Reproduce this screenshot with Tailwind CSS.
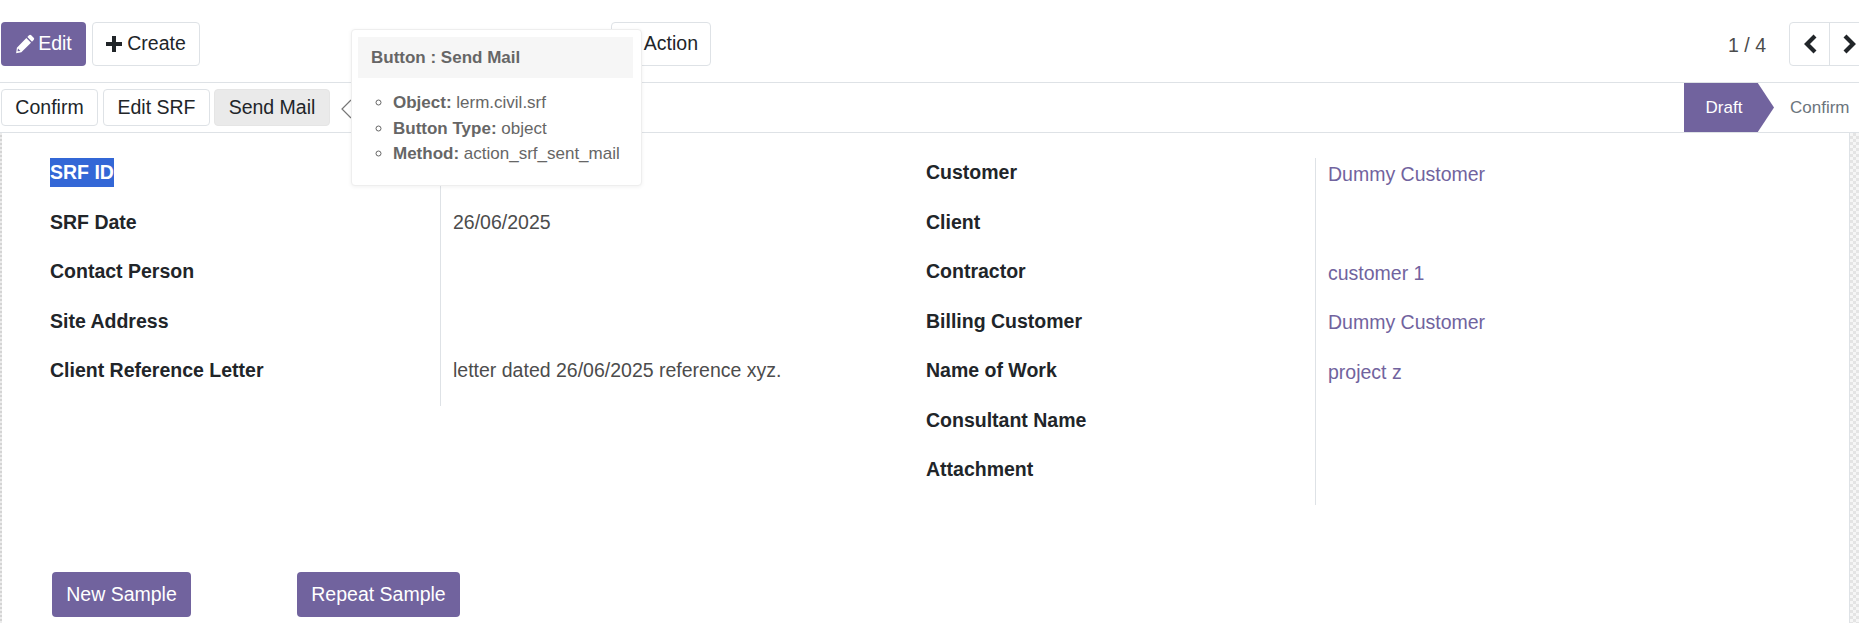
<!DOCTYPE html>
<html>
<head>
<meta charset="utf-8">
<script src="https://cdn.jsdelivr.net/npm/@tailwindcss/browser@4"></script>
</head>
<body class="bg-white">
<div class="relative w-[1859px] h-[623px] overflow-hidden bg-white font-['Liberation_Sans',Arial,sans-serif] text-[19.5px] text-[#212529]">

  <!-- control panel top -->
  <div class="flex items-start h-[83px] border-b border-[#dee2e6] pt-[22px] pl-[1px]">
    <button class="flex items-center justify-center gap-[3px] w-[85px] h-[44px] rounded-[4px] bg-[#71639e] text-white">
      <svg class="w-[20px] h-[20px]" viewBox="0 0 18 18" fill="#fff"><path d="M12.6 1.2a1.4 1.4 0 0 1 2 0l2.2 2.2a1.4 1.4 0 0 1 0 2L15.3 7 11.1 2.7zM10.2 3.6l4.2 4.2-8.7 8.7-4.7.8.7-4.9zM2.7 13l-.4 2.6 2.6-.4z"/></svg>
      <span>Edit</span>
    </button>
    <button class="flex items-center justify-center gap-[5px] ml-[6px] w-[108px] h-[44px] rounded-[4px] border border-[#dee2e6] bg-white">
      <svg class="w-[16px] h-[16px]" viewBox="0 0 16 16" fill="#212529"><path d="M6 0h4v6h6v4h-6v6H6v-6H0V6h6z"/></svg>
      <span>Create</span>
    </button>
    <button class="flex items-center justify-end pr-[12px] ml-[411px] w-[100px] h-[44px] rounded-[4px] border border-[#dee2e6] bg-white">Action</button>
    <span class="ml-auto mt-[9px] text-[#4c4c4c]">1 / 4</span>
    <div class="flex shrink-0 ml-[23px] mr-[-12px] w-[82px] h-[44px] rounded-[4px] border border-[#dee2e6]">
      <div class="flex items-center justify-center w-[40px] border-r border-[#dee2e6]">
        <svg class="w-[14px] h-[20px]" viewBox="0 0 14 20" fill="none" stroke="#212529" stroke-width="4.2"><path d="M12 2 4 10l8 8"/></svg>
      </div>
      <div class="flex items-center justify-start pl-[13px] flex-1">
        <svg class="w-[14px] h-[20px]" viewBox="0 0 14 20" fill="none" stroke="#212529" stroke-width="4.2"><path d="m2 2 8 8-8 8"/></svg>
      </div>
    </div>
  </div>

  <!-- status bar -->
  <div class="flex items-start h-[50px] border-b border-[#dee2e6] pl-[1px]">
    <div class="flex items-center gap-[5px] pt-[6px]">
      <button class="w-[97px] h-[37px] rounded-[4px] border border-[#dee2e6] bg-white">Confirm</button>
      <button class="w-[107px] h-[37px] rounded-[4px] border border-[#dee2e6] bg-white">Edit SRF</button>
      <button class="w-[116px] h-[37px] ml-[-1px] rounded-[4px] bg-[#eaeaea] border border-[#e5e5e5]">Send Mail</button>
    </div>
    <svg class="w-[11px] h-[20px] ml-[11px] mt-[16px]" viewBox="0 0 11 20" fill="none" stroke="#777" stroke-width="1.2"><path d="M10 1 1 10l9 9"/></svg>
    <div class="ml-auto flex shrink-0">
      <div class="flex items-center justify-center w-[90px] h-[49px] pr-[10px] bg-[#71639e] text-white text-[17px] [clip-path:polygon(0_0,82%_0,100%_50%,82%_100%,0_100%)]">Draft</div>
      <div class="flex items-center w-[85px] h-[49px] pl-[16px] text-[17px] text-[#6c757d] whitespace-nowrap">Confirm</div>
    </div>
  </div>

  <!-- sheet -->
  <div class="flex h-[490px]">
    <div class="w-[2px] shrink-0 bg-[repeating-conic-gradient(#d4d4d4_0_25%,#ececec_0_50%)] bg-[length:4px_4px]"></div>
    <div class="flex-1 flex flex-col">
      <div class="flex items-start pt-[25px] pl-[48px] h-[439px]">
        <!-- left group -->
        <div class="flex flex-col w-[390px] font-bold text-[#212529]">
          <div class="h-[51px]"><span class="inline-block h-[29px] leading-[29px] bg-[#3367d6] text-white">SRF ID</span></div>
          <div class="h-[48px] leading-[26px]">SRF Date</div>
          <div class="h-[50px] leading-[26px] pt-[1px]">Contact Person</div>
          <div class="h-[49px] leading-[26px] pt-[1px]">Site Address</div>
          <div class="h-[50px] leading-[26px] pt-[1px]">Client Reference Letter</div>
        </div>
        <div class="flex flex-col w-[486px] h-[248px] border-l border-[#dee2e6] pl-[12px] text-[#4c4c4c]">
          <div class="h-[51px]"></div>
          <div class="h-[48px] leading-[26px]">26/06/2025</div>
          <div class="h-[50px]"></div>
          <div class="h-[49px]"></div>
          <div class="h-[50px] leading-[26px] pt-[1px]">letter dated 26/06/2025 reference xyz.</div>
        </div>
        <!-- right group -->
        <div class="flex flex-col w-[389px] font-bold">
          <div class="h-[51px] leading-[26px] pt-[1px]">Customer</div>
          <div class="h-[48px] leading-[26px]">Client</div>
          <div class="h-[50px] leading-[26px] pt-[1px]">Contractor</div>
          <div class="h-[49px] leading-[26px] pt-[1px]">Billing Customer</div>
          <div class="h-[50px] leading-[26px] pt-[1px]">Name of Work</div>
          <div class="h-[49px] leading-[26px] pt-[1px]">Consultant Name</div>
          <div class="h-[50px] leading-[26px] pt-[1px]">Attachment</div>
        </div>
        <div class="flex flex-col w-[400px] h-[347px] border-l border-[#dee2e6] pl-[12px] text-[#71639e]">
          <div class="h-[51px] pt-[3px] leading-[26px]">Dummy Customer</div>
          <div class="h-[48px]"></div>
          <div class="h-[50px] pt-[3px] leading-[26px]">customer 1</div>
          <div class="h-[49px] pt-[2px] leading-[26px]">Dummy Customer</div>
          <div class="h-[50px] pt-[3px] leading-[26px]">project z</div>
        </div>
      </div>
      <div class="flex pl-[50px] gap-[106px]">
        <button class="w-[139px] h-[45px] rounded-[4px] bg-[#71639e] text-white">New Sample</button>
        <button class="w-[163px] h-[45px] rounded-[4px] bg-[#71639e] text-white">Repeat Sample</button>
      </div>
    </div>
    <div class="w-[10px] shrink-0 border-l border-[#dee2e6] bg-[repeating-conic-gradient(#e4e4e4_0_25%,#f6f6f6_0_50%)] bg-[length:6px_6px]"></div>
  </div>

  <!-- tooltip -->
  <div class="absolute left-[351px] top-[29px] w-[291px] h-[157px] rounded-[4px] border border-[#eeeeee] bg-white pt-[7px] pl-[6px] pr-[8px] text-[17px] text-[#666666] shadow-[0_1px_4px_rgba(0,0,0,0.06)]">
    <div class="h-[41px] leading-[41px] pl-[13px] bg-[#f6f6f6] font-bold">Button : Send Mail</div>
    <ul class="mt-[12px] pl-[35px] list-[circle] leading-[25.5px]">
      <li><b>Object:</b> lerm.civil.srf</li>
      <li><b>Button Type:</b> object</li>
      <li><b>Method:</b> action_srf_sent_mail</li>
    </ul>
  </div>
</div>
</body>
</html>
